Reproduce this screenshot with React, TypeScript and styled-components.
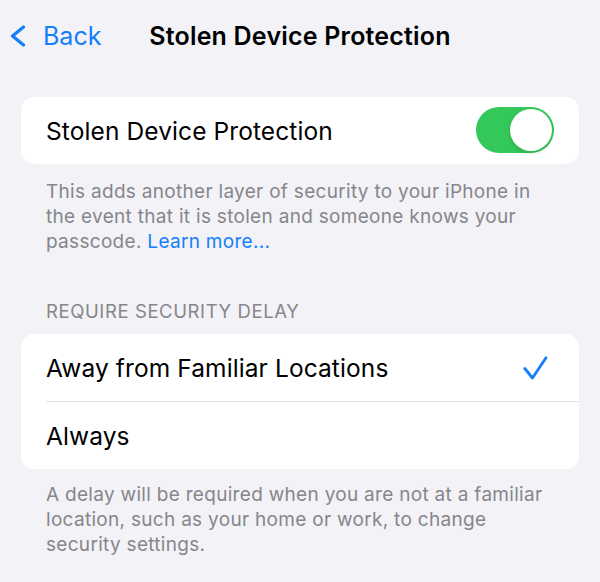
import React from 'react'
import styled, { createGlobalStyle } from 'styled-components'

const GlobalStyle = createGlobalStyle`
  html, body {
    margin: 0;
    padding: 0;
    background: #f2f2f7;
    font-family: Inter, "Noto Sans", "Liberation Sans", sans-serif;
    -webkit-font-smoothing: antialiased;
  }
`

const Screen = styled.div`
  width: 600px;
  min-height: 582px;
  background: #f2f2f7;
`

const NavBar = styled.div`
  display: grid;
  grid-template-columns: 1fr auto 1fr;
  align-items: center;
  height: 72px;
`

const BackButton = styled.button`
  display: flex;
  align-items: center;
  gap: 17px;
  padding: 0 0 0 10px;
  border: none;
  background: none;
  color: #147efb;
  font-family: inherit;
  font-size: 25px;
  justify-self: start;
  cursor: pointer;
`

const Title = styled.h1`
  margin: 0;
  font-size: 25px;
  font-weight: 600;
  letter-spacing: 0.2px;
  color: #000;
`

const Section = styled.section<{ $top: number }>`
  margin-top: ${(p) => p.$top}px;
`

const SectionHeader = styled.div`
  padding: 0 46px 12px;
  font-size: 18.5px;
  line-height: 22px;
  letter-spacing: 0.6px;
  color: #86868b;
  text-transform: uppercase;
`

const Card = styled.div`
  margin: 0 21px;
  background: #fff;
  border-radius: 13px;
  overflow: hidden;
`

const Row = styled.div<{ $divider?: boolean }>`
  display: flex;
  align-items: center;
  justify-content: space-between;
  height: 67px;
  margin-left: 25px;
  padding-right: 25px;
  font-size: 24.5px;
  letter-spacing: 0.1px;
  color: #000;
  border-bottom: ${(p) => (p.$divider ? '1.5px solid #e3e3e7' : 'none')};
`

const Footer = styled.p<{ $gap: number }>`
  margin: 0;
  padding: ${(p) => p.$gap}px 46px 0;
  font-size: 19px;
  line-height: 25px;
  letter-spacing: 0.3px;
  color: #86868b;
`

const Link = styled.a`
  color: #147efb;
  text-decoration: none;
`

const Switch = styled.div<{ $on: boolean }>`
  display: flex;
  align-items: center;
  justify-content: ${(p) => (p.$on ? 'flex-end' : 'flex-start')};
  width: 78px;
  height: 46px;
  padding: 2px;
  box-sizing: border-box;
  border-radius: 23px;
  background: ${(p) => (p.$on ? '#34c759' : '#e9e9ea')};
  margin-top: -2px;
`

const Knob = styled.div`
  width: 42px;
  height: 42px;
  border-radius: 50%;
  background: #fff;
  box-shadow: 0 2px 4px rgba(0, 0, 0, 0.12);
`

const CheckMark = styled.svg`
  margin-right: 6px;
`

const Chevron = () => (
  <svg width="16" height="22" viewBox="0 0 16 22" fill="none">
    <polyline
      points="13.5,2 2.5,11 13.5,20"
      stroke="#147efb"
      strokeWidth="3.2"
      strokeLinecap="round"
      strokeLinejoin="round"
    />
  </svg>
)

const Check = () => (
  <CheckMark width="25" height="24" viewBox="0 0 25 24" fill="none">
    <polyline
      points="1.8,12.5 9.5,22 23,1.8"
      stroke="#147efb"
      strokeWidth="2.8"
      strokeLinecap="round"
      strokeLinejoin="round"
    />
  </CheckMark>
)

const App = () => {
  return (
    <Screen>
      <GlobalStyle />
      <NavBar>
        <BackButton>
          <Chevron />
          Back
        </BackButton>
        <Title>Stolen Device Protection</Title>
        <div />
      </NavBar>

      <Section $top={25}>
        <Card>
          <Row>
            Stolen Device Protection
            <Switch $on>
              <Knob />
            </Switch>
          </Row>
        </Card>
        <Footer $gap={15}>
          This adds another layer of security to your iPhone in the event that
          it is stolen and someone knows your passcode.{' '}
          <Link href="#">Learn more...</Link>
        </Footer>
      </Section>

      <Section $top={46}>
        <SectionHeader>Require Security Delay</SectionHeader>
        <Card>
          <Row $divider>
            Away from Familiar Locations
            <Check />
          </Row>
          <Row>Always</Row>
        </Card>
        <Footer $gap={13}>
          A delay will be required when you are not at a familiar location,
          such as your home or work, to change security settings.
        </Footer>
      </Section>
    </Screen>
  )
}

export default App
